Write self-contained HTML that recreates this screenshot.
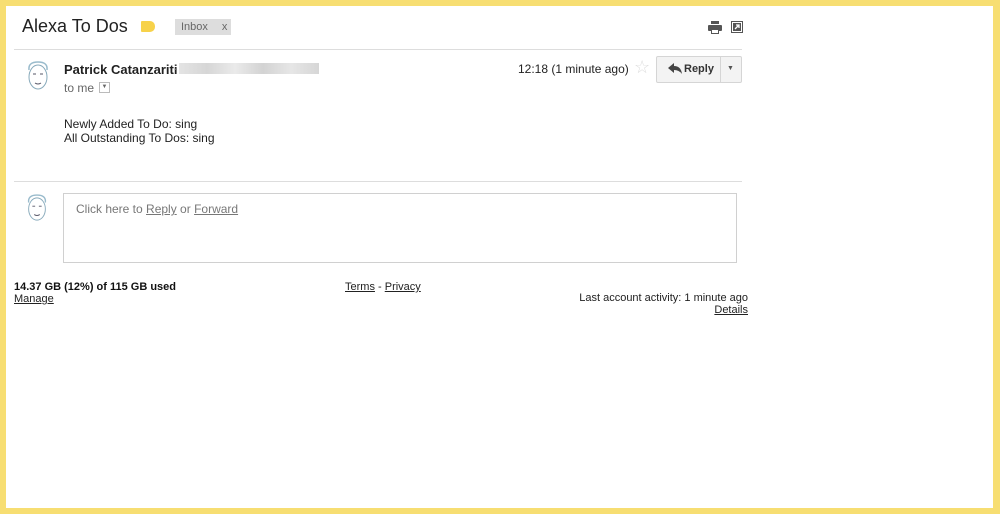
<!DOCTYPE html>
<html><head><meta charset="utf-8"><style>
*{margin:0;padding:0;box-sizing:border-box}
html,body{width:1000px;height:514px;overflow:hidden;background:#f7de72;font-family:"Liberation Sans",Arial,sans-serif}
#pg{position:absolute;left:6px;top:6px;width:987px;height:502px;background:#fff}
.a{position:absolute;white-space:nowrap}
u{text-decoration:underline}
</style></head><body>
<div id="pg"></div>
<div class="a" style="left:22px;top:16px;font-size:18px;color:#222">Alexa To Dos</div>
<div class="a" style="left:141px;top:21px;width:14px;height:11px;background:#f7d24a;border-radius:1px 5px 5px 1px"></div>
<div class="a" style="left:175px;top:19px;width:56px;height:16px;background:#ddd;font-size:11px;color:#666;padding:2px 0 0 6px">Inbox<span style="margin-left:14px">x</span></div>
<svg class="a" style="left:708px;top:21px" width="14" height="13" viewBox="0 0 14 13"><rect x="3" y="0" width="8" height="3" fill="#555"/><rect x="0" y="4" width="14" height="6" rx="1" fill="#555"/><rect x="3" y="8" width="8" height="5" fill="#555"/><rect x="4" y="9" width="6" height="3" fill="#fff"/></svg>
<svg class="a" style="left:731px;top:21px" width="12" height="12" viewBox="0 0 12 12"><rect x="0.5" y="0.5" width="11" height="11" fill="none" stroke="#555"/><rect x="2" y="2" width="8" height="8" fill="#555"/><path d="M4 8 L8 4 M5 4 H8 V7" stroke="#fff" stroke-width="1.3" fill="none"/></svg>
<div class="a" style="left:14px;top:49px;width:728px;height:1px;background:#ddd"></div>
<svg class="a" style="left:24px;top:60px" width="28" height="34" viewBox="0 0 28 34"><path d="M5 10 Q4 2 14 2 Q24 2 23 10" fill="none" stroke="#9bc" stroke-width="1.5"/><ellipse cx="14" cy="17" rx="9" ry="12" fill="#fff" stroke="#8ab" stroke-width="1"/><path d="M9 14h3M16 14h3M11 23q3 2 6 0" stroke="#556" stroke-width="1" fill="none"/></svg>
<div class="a" style="left:64px;top:62px;font-size:13px;font-weight:bold;color:#222">Patrick Catanzariti</div>
<div class="a" style="left:173px;top:61px;font-size:13px;color:#777">·</div>
<div class="a" style="left:179px;top:63px;width:140px;height:11px;background:linear-gradient(90deg,#ddd,#ccc 20%,#e5e5e5 40%,#c8c8c8 60%,#e0e0e0 80%,#ccc);opacity:.8"></div>
<div class="a" style="left:64px;top:81px;font-size:12px;color:#666">to me</div>
<div class="a" style="left:99px;top:82px;width:11px;height:11px;border:1px solid #bbb;font-size:6px;color:#666;text-align:center;line-height:9px">▼</div>
<div class="a" style="left:518px;top:62px;font-size:12px;color:#222">12:18 (1 minute ago)</div>
<div class="a" style="left:634px;top:57px;font-size:18px;color:#ddd">☆</div>
<div class="a" style="left:656px;top:56px;width:86px;height:27px;border:1px solid #d5d5d5;background:#f3f3f3;border-radius:2px"></div>
<div class="a" style="left:720px;top:56px;width:1px;height:27px;background:#d5d5d5"></div>
<svg class="a" style="left:668px;top:63px" width="14" height="11" viewBox="0 0 14 11"><path d="M0 5 L6 0 V3 Q13 3 14 11 Q11 7 6 7 V10 Z" fill="#444"/></svg>
<div class="a" style="left:684px;top:63px;font-size:11px;font-weight:bold;color:#333">Reply</div>
<div class="a" style="left:727px;top:65px;font-size:7px;color:#555">▼</div>
<div class="a" style="left:64px;top:117px;font-size:12px;color:#222;line-height:14px">Newly Added To Do: sing<br>All Outstanding To Dos: sing</div>
<div class="a" style="left:14px;top:181px;width:728px;height:1px;background:#ddd"></div>
<svg class="a" style="left:24px;top:193px" width="26" height="32" viewBox="0 0 28 34"><path d="M5 10 Q4 2 14 2 Q24 2 23 10" fill="none" stroke="#9bc" stroke-width="1.5"/><ellipse cx="14" cy="17" rx="9" ry="12" fill="#fff" stroke="#8ab" stroke-width="1"/><path d="M9 14h3M16 14h3M11 23q3 2 6 0" stroke="#556" stroke-width="1" fill="none"/></svg>
<div class="a" style="left:63px;top:193px;width:674px;height:70px;border:1px solid #d0d0d0"></div>
<div class="a" style="left:76px;top:202px;font-size:12px;color:#777">Click here to <u>Reply</u> or <u>Forward</u></div>
<div class="a" style="left:14px;top:281px;font-size:11px;color:#111;line-height:12px;font-weight:bold">14.37 GB (12%) of 115 GB used</div>
<div class="a" style="left:14px;top:293px;font-size:11px;color:#222"><u>Manage</u></div>
<div class="a" style="left:345px;top:281px;font-size:11px;color:#222"><u>Terms</u> - <u>Privacy</u></div>
<div class="a" style="left:548px;top:292px;width:200px;text-align:right;font-size:11px;color:#222;line-height:12px">Last account activity: 1 minute ago<br><u>Details</u></div>
</body></html>
